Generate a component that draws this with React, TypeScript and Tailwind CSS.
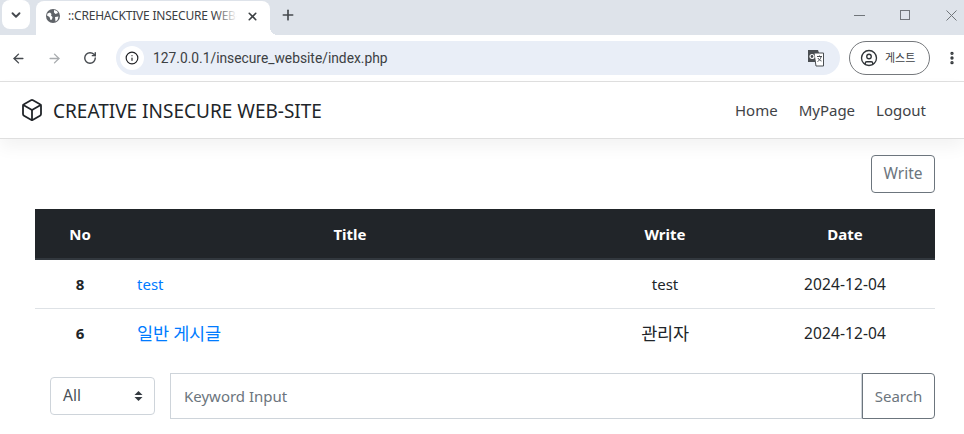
import { ArrowLeft, ArrowRight, Box, ChevronDown, Info, MoreVertical, Plus, RotateCw, UserCircle, X } from "lucide-react";

const pageFont = "font-['Noto_Sans','Noto_Sans_CJK_KR',sans-serif]";
// Korean glyphs in the screenshot run wider than the latin text beside them
const koText = "text-[17.5px] tracking-[-0.2px]";

const posts = [
  { no: 8, title: "test", writer: "test", date: "2024-12-04", ko: false },
  { no: 6, title: "일반 게시글", writer: "관리자", date: "2024-12-04", ko: true },
];

function GlobeIcon() {
  return (
    <svg width="16" height="16" viewBox="0 0 16 16" className="shrink-0">
      <circle cx="8" cy="8" r="7" fill="#5f6368" />
      <path d="M2.5 5.5 5 4.5 6.5 6 6 7.5 7.5 9 7 11.5 5.5 12 4.5 9 2 7.5ZM9 2 12 3 13 5 10.5 6 9 4.5ZM10 9 13.5 8.5 12.5 12 10.5 13.5Z" fill="#fff" />
    </svg>
  );
}

function TranslateIcon() {
  return (
    <svg width="18" height="18" viewBox="0 0 18 18" className="ml-auto mr-[15px]">
      <path d="M1 1h10l1 3v9H1z" fill="#4a4e52" />
      <path d="M7 4h9.5v13H9z" fill="#fff" stroke="#4a4e52" strokeWidth="1" />
      <circle cx="5" cy="7.5" r="2" fill="none" stroke="#fff" strokeWidth="1.2" />
      <path d="M10 7.5h5M12.5 6.5v1M14 8c-.5 2.500-2 3.500-3.500 4.500M11 9c.5 1.500 2 2.500 3.500 3" fill="none" stroke="#4a4e52" strokeWidth="1" />
    </svg>
  );
}

function WindowControls() {
  return (
    <svg width="112" height="20" viewBox="0 0 112 20" className="ml-auto mr-[3px] mt-[5px] self-start text-[#70757a]">
      <path d="M5 10.500h11" stroke="currentColor" fill="none" />
      <rect x="51.500" y="5.500" width="9" height="9" stroke="currentColor" fill="none" />
      <path d="M97.500 5.500l10 10M107.500 5.500l-10 10" stroke="currentColor" fill="none" />
    </svg>
  );
}

function BrowserChrome() {
  return (
    <div className="font-['Noto_Sans','Noto_Sans_CJK_KR',sans-serif]">
      {/* Tab strip */}
      <div className="flex h-[35px] items-center bg-[#dee3ea] text-[#45494e]">
        <div className="ml-[2px] flex h-[29px] w-[28px] items-center justify-center self-start rounded-lg bg-white">
          <ChevronDown size={14} strokeWidth={3.2} />
        </div>
        <div className="relative ml-[6px] flex h-[34px] w-[234px] items-center self-end rounded-t-lg bg-white pb-[4px] pl-[9px]">
          <GlobeIcon />
          <span className="relative ml-[7px] w-[169px] overflow-hidden whitespace-nowrap text-[12px] tracking-[-0.2px] text-[#3c4043]">
            ::CREHACKTIVE INSECURE WEB-SITE
            <span className="absolute inset-y-0 right-0 w-[22px] bg-gradient-to-r from-transparent to-white" />
          </span>
          <X size={13} strokeWidth={3} className="ml-[9px] text-[#3c4043]" />
          <span className="absolute bottom-0 right-[-8px] h-[8px] w-[8px] bg-[radial-gradient(circle_at_100%_0%,transparent_8px,#fff_8px)]" />
        </div>
        <Plus size={16} strokeWidth={2.5} className="ml-[10px] mt-[7px] self-start" />
        <WindowControls />
      </div>
      {/* Address bar */}
      <div className="flex h-[47px] items-center border-b border-[#e0e0e0] bg-white text-[#45494e]">
        <ArrowLeft size={15} strokeWidth={2.2} className="ml-[11px]" />
        <ArrowRight size={15} strokeWidth={2.2} className="ml-[21px] text-[#a9acaf]" />
        <RotateCw size={14} strokeWidth={2.4} className="ml-[21px]" />
        <div className="ml-[19px] flex h-[34px] w-[724px] items-center rounded-full bg-[#e9eef7]">
          <div className="ml-[4px] flex h-[24px] w-[24px] items-center justify-center rounded-full bg-white">
            <Info size={14} strokeWidth={2} className="text-[#202124]" />
          </div>
          <span className="ml-[9px] font-['Roboto'] text-[13.8px] text-[#3c4043]">127.0.0.1/insecure_website/index.php</span>
          <TranslateIcon />
        </div>
        <div className="ml-[9px] flex h-[34px] w-[81px] items-center rounded-full border border-[#75787c]">
          <UserCircle size={18} strokeWidth={1.8} className="ml-[10px] text-[#303438]" />
          <span className="ml-[7px] text-[11px] text-[#3c4043]">게스트</span>
        </div>
        <MoreVertical size={16} strokeWidth={3} className="ml-[14px] text-[#303438]" />
      </div>
    </div>
  );
}

function Navbar() {
  return (
    <nav className="flex h-[57px] items-center border-b border-[#dfdfdf] bg-white pl-[20px] pr-[38px] shadow-[0_8px_16px_rgba(0,0,0,0.05)]">
      <Box size={24} strokeWidth={1.8} className="text-[#212529]" />
      <span className="ml-[9px] pt-px text-[19px] leading-[30px] text-[#212529]">CREATIVE INSECURE WEB-SITE</span>
      <div className="ml-auto flex gap-[21px] text-[15px] text-[#3f4347]">
        <span>Home</span>
        <span>MyPage</span>
        <span>Logout</span>
      </div>
    </nav>
  );
}

export default function App() {
  return (
    <div className={`h-[434px] w-[964px] overflow-hidden bg-white ${pageFont}`}>
      <BrowserChrome />
      <Navbar />
      <main className="pl-[35px] pr-[29px]">
        <div className="flex justify-end pt-[16px]">
          <button className="h-[38px] w-[64px] rounded border border-[#6c757d] text-[15.5px] text-[#6c757d]">Write</button>
        </div>
        <table className="mt-[16px] w-[900px] table-fixed border-collapse text-[15px] text-[#212529]">
          <thead>
            <tr className="h-[50px] border-b-2 border-[#32383e] bg-[#212529] text-white">
              <th className="w-[90px] pt-px font-bold">No</th>
              <th className="w-[450px] pt-px font-bold">Title</th>
              <th className="w-[180px] pt-px font-bold">Write</th>
              <th className="w-[180px] pt-px font-bold">Date</th>
            </tr>
          </thead>
          <tbody>
            {posts.map((post) => (
              <tr key={post.no} className="h-[49px] border-b border-[#dee2e6] last:border-b-0">
                <td className="text-center font-bold">{post.no}</td>
                <td className={`pl-[12px] text-[#007bff] ${post.ko ? koText : ""}`}>{post.title}</td>
                <td className={`text-center ${post.ko ? koText : ""}`}>{post.writer}</td>
                <td className="pt-[2px] text-center text-[15.5px] tracking-[0.1px]">{post.date}</td>
              </tr>
            ))}
          </tbody>
        </table>
        <div className="mt-[16px] flex items-center pl-[15px]">
          <div className="flex h-[38px] w-[105px] items-center justify-between rounded border border-[#ced4da] pl-[12px] pr-[11px] text-[15.5px] text-[#495057]">
            <span>All</span>
            <svg width="9" height="12" viewBox="0 0 9 12" className="text-[#343a40]">
              <path d="M4.500 1 8.500 5H.5zM4.500 11 .5 7h8z" fill="currentColor" />
            </svg>
          </div>
          <div className="ml-[15px] flex h-[46px] w-[692px] items-center border border-[#ced4da] pl-[13px] text-[15px] text-[#6c757d]">
            Keyword Input
          </div>
          <button className="h-[46px] w-[73px] rounded-r border border-[#6c757d] text-[15px] text-[#6c757d]">Search</button>
        </div>
      </main>
    </div>
  );
}
